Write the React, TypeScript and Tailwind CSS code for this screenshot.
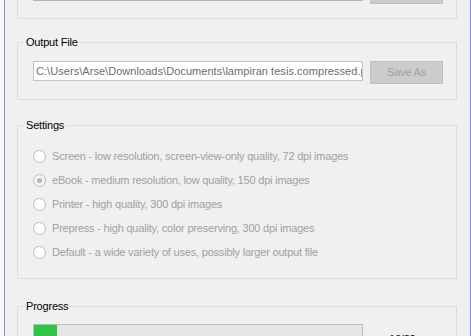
const radios = [
  { label: 'Screen - low resolution, screen-view-only quality, 72 dpi images', checked: false },
  { label: 'eBook - medium resolution, low quality, 150 dpi images', checked: true },
  { label: 'Printer - high quality, 300 dpi images', checked: false },
  { label: 'Prepress - high quality, color preserving, 300 dpi images', checked: false },
  { label: 'Default - a wide variety of uses, possibly larger output file', checked: false },
];

function Radio({ label, checked }: { label: string; checked: boolean }) {
  return (
    <div className="flex h-[24px] items-center">
      <span
        className={`flex h-[13px] w-[13px] items-center justify-center rounded-full border border-[#bcbcbc] ${
          checked ? 'bg-[#f4f4f4]' : 'bg-white'
        }`}
      >
        {checked && <span className="h-[5px] w-[5px] rounded-full bg-[#b4b4b4]" />}
      </span>
      <span className="ml-[6px] whitespace-nowrap text-[#a0a0a0]">{label}</span>
    </div>
  );
}

function Group({ title, className, children }: { title: string; className?: string; children: React.ReactNode }) {
  return (
    <fieldset className={`w-[440px] shrink-0 border border-[#dcdcdc] p-0 ${className ?? ''}`}>
      <legend className="ml-[7px] px-[1px] leading-[13px] text-black">{title}</legend>
      {children}
    </fieldset>
  );
}

export default function App() {
  return (
    <div className="flex h-[336px] w-[471px] overflow-hidden bg-[#f0f0f0] font-['Liberation_Sans',Arial,sans-serif] text-[11px] tracking-[-0.2px]">
      <div className="w-[4px] bg-[#f8f8f8]" />
      <div className="w-px bg-[#8a8ad6]" />
      <div className="flex flex-1 flex-col pl-[12px]">
        {/* top group, mostly scrolled off */}
        <div className="flex h-[19px] w-[440px] shrink-0 items-start gap-[7px] border-x border-b border-[#dcdcdc] pl-[15px]">
          <div className="h-px w-[330px] bg-[#b4b4b4]" />
          <div className="h-[4px] w-[73px] border-x border-b border-[#bfbfbf] bg-[#cccccc]" />
        </div>

        <Group title="Output File" className="mt-[17px]">
          <div className="flex items-start gap-[7px] pb-[15px] pl-[15px] pt-[12px]">
            <div className="flex h-[20px] w-[330px] items-center overflow-hidden whitespace-nowrap border border-[#c4c4c4] bg-white pl-[2px] tracking-[0.05px] text-[#6d6d6d]">
              C:\Users\Arse\Downloads\Documents\lampiran tesis.compressed.pdf
            </div>
            <div className="flex h-[23px] w-[73px] items-center justify-center border border-[#bfbfbf] bg-[#cccccc] text-[#a0a0a0]">
              Save As
            </div>
          </div>
        </Group>

        <Group title="Settings" className="mt-[19px]">
          <div className="flex flex-col pb-[14px] pl-[15px] pt-[12px]">
            {radios.map((r) => (
              <Radio key={r.label} label={r.label} checked={r.checked} />
            ))}
          </div>
        </Group>

        <Group title="Progress" className="mt-[21px]">
          <div className="flex items-start pl-[15px] pt-[11px]">
            <div className="h-[23px] w-[330px] border border-[#bcbcbc] bg-[#e6e6e6]">
              <div className="h-full w-[23px] bg-[#2ec445]" />
            </div>
            <span className="ml-[26px] mt-[7px] text-black">16/82</span>
          </div>
        </Group>
      </div>
      <div className="w-px bg-[#8a8ad6]" />
    </div>
  );
}
